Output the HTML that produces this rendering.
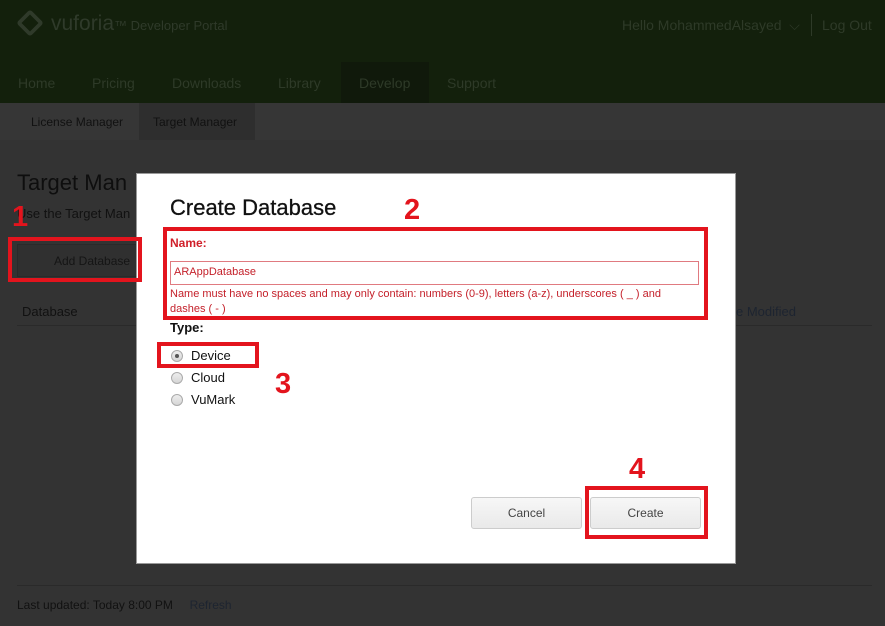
<!DOCTYPE html>
<html><head><style>
*{margin:0;padding:0;box-sizing:border-box}
body{width:885px;height:626px;background:#333;font-family:"Liberation Sans",sans-serif;position:relative;overflow:hidden}
.a{position:absolute;white-space:nowrap}
.top{position:absolute;left:0;top:0;width:885px;height:103px;background:#13200c}
.nav span{position:absolute;top:75px;font-size:14px;color:#2e3a28}
.sub{position:absolute;left:0;top:103px;width:885px;height:37px;background:#363636}
.red{position:absolute;border:4px solid #e3141d}
.num{position:absolute;color:#e3141d;font-weight:bold;font-size:29px;line-height:1}
.btn{position:absolute;top:497px;height:32px;border:1px solid #ccc;border-radius:3px;background:linear-gradient(#f7f7f7,#e9e9e9);font-size:12px;color:#444;text-align:center;line-height:31px}
.radio{position:absolute;left:171px;width:12px;height:12px;border-radius:50%;border:1px solid #aaa;background:linear-gradient(#eee,#d5d5d5)}
</style></head><body>
<div class="top"></div>
<div class="a" style="left:17px;top:10px;width:26px;height:26px;transform:rotate(45deg) scale(.75);border:5px solid #2f3a2a;border-radius:4px"></div>
<div class="a" style="left:51px;top:12px;font-size:21px;color:#2f3a2a">vuforia<span style="font-size:13px">™ Developer Portal</span></div>
<div class="a" style="left:622px;top:17px;font-size:14px;color:#2e3a28">Hello MohammedAlsayed &nbsp;⌵</div>
<div class="a" style="left:811px;top:14px;width:1px;height:22px;background:#2e3a28"></div>
<div class="a" style="left:822px;top:17px;font-size:14px;color:#2e3a28">Log Out</div>
<div class="a" style="left:341px;top:62px;width:88px;height:41px;background:#10190b"></div>
<div class="nav"><span style="left:18px">Home</span><span style="left:92px">Pricing</span><span style="left:172px">Downloads</span><span style="left:278px">Library</span><span style="left:359px">Develop</span><span style="left:447px">Support</span></div>
<div class="sub"></div>
<div class="a" style="left:139px;top:103px;width:116px;height:37px;background:#2e2e2e"></div>
<div class="a" style="left:31px;top:115px;font-size:12px;color:#111">License Manager</div>
<div class="a" style="left:153px;top:115px;font-size:12px;color:#111">Target Manager</div>
<div class="a" style="left:17px;top:170px;font-size:22px;color:#0e0e0e">Target Man</div>
<div class="a" style="left:17px;top:206px;font-size:13px;color:#111">Use the Target Man</div>
<div class="a" style="left:17px;top:244px;width:125px;height:33px;border:1px solid #2a2a2a;background:#303030"></div>
<div class="a" style="left:54px;top:254px;font-size:12px;color:#151515">Add Database</div>
<div class="a" style="left:22px;top:304px;font-size:13px;color:#111">Database</div>
<div class="a" style="left:736px;top:304px;font-size:13px;color:#1d2430">e Modified</div>
<div class="a" style="left:17px;top:325px;width:855px;height:1px;background:#2a2a2a"></div>
<div class="a" style="left:17px;top:585px;width:855px;height:1px;background:#2a2a2a"></div>
<div class="a" style="left:17px;top:598px;font-size:12px;color:#111">Last updated: Today 8:00 PM &nbsp;&nbsp;&nbsp;&nbsp;<span style="color:#1d2430">Refresh</span></div>

<div class="a" style="left:136px;top:173px;width:600px;height:391px;background:#fff;border:1px solid #999"></div>
<div class="a" style="left:170px;top:195px;font-size:22px;color:#111;-webkit-text-stroke:0.3px #111">Create Database</div>
<div class="a" style="left:170px;top:236px;font-size:12px;font-weight:bold;color:#d0202a">Name:</div>
<div class="a" style="left:170px;top:261px;width:529px;height:24px;border:1px solid #e07a80"></div>
<div class="a" style="left:174px;top:266px;font-size:11px;color:#c4202a">ARAppDatabase</div>
<div class="a" style="left:170px;top:287px;font-size:11px;color:#c4202a;line-height:15px">Name must have no spaces and may only contain: numbers (0-9), letters (a-z), underscores ( _ ) and<br>dashes ( - )</div>
<div class="a" style="left:170px;top:320px;font-size:13px;font-weight:bold;color:#111">Type:</div>
<div class="radio" style="top:350px"><div style="margin:3px;width:4px;height:4px;border-radius:50%;background:#555"></div></div>
<div class="radio" style="top:372px"></div>
<div class="radio" style="top:394px"></div>
<div class="a" style="left:191px;top:348px;font-size:13px;color:#111">Device</div>
<div class="a" style="left:191px;top:370px;font-size:13px;color:#111">Cloud</div>
<div class="a" style="left:191px;top:392px;font-size:13px;color:#111">VuMark</div>
<div class="btn" style="left:471px;width:111px">Cancel</div>
<div class="btn" style="left:590px;width:111px">Create</div>

<div class="red" style="left:8px;top:237px;width:134px;height:45px"></div>
<div class="red" style="left:163px;top:227px;width:545px;height:93px"></div>
<div class="red" style="left:157px;top:342px;width:102px;height:26px"></div>
<div class="red" style="left:585px;top:486px;width:123px;height:53px"></div>
<div class="num" style="left:12px;top:203px">1</div>
<div class="num" style="left:404px;top:196px">2</div>
<div class="num" style="left:275px;top:370px">3</div>
<div class="num" style="left:629px;top:455px">4</div>
</body></html>
